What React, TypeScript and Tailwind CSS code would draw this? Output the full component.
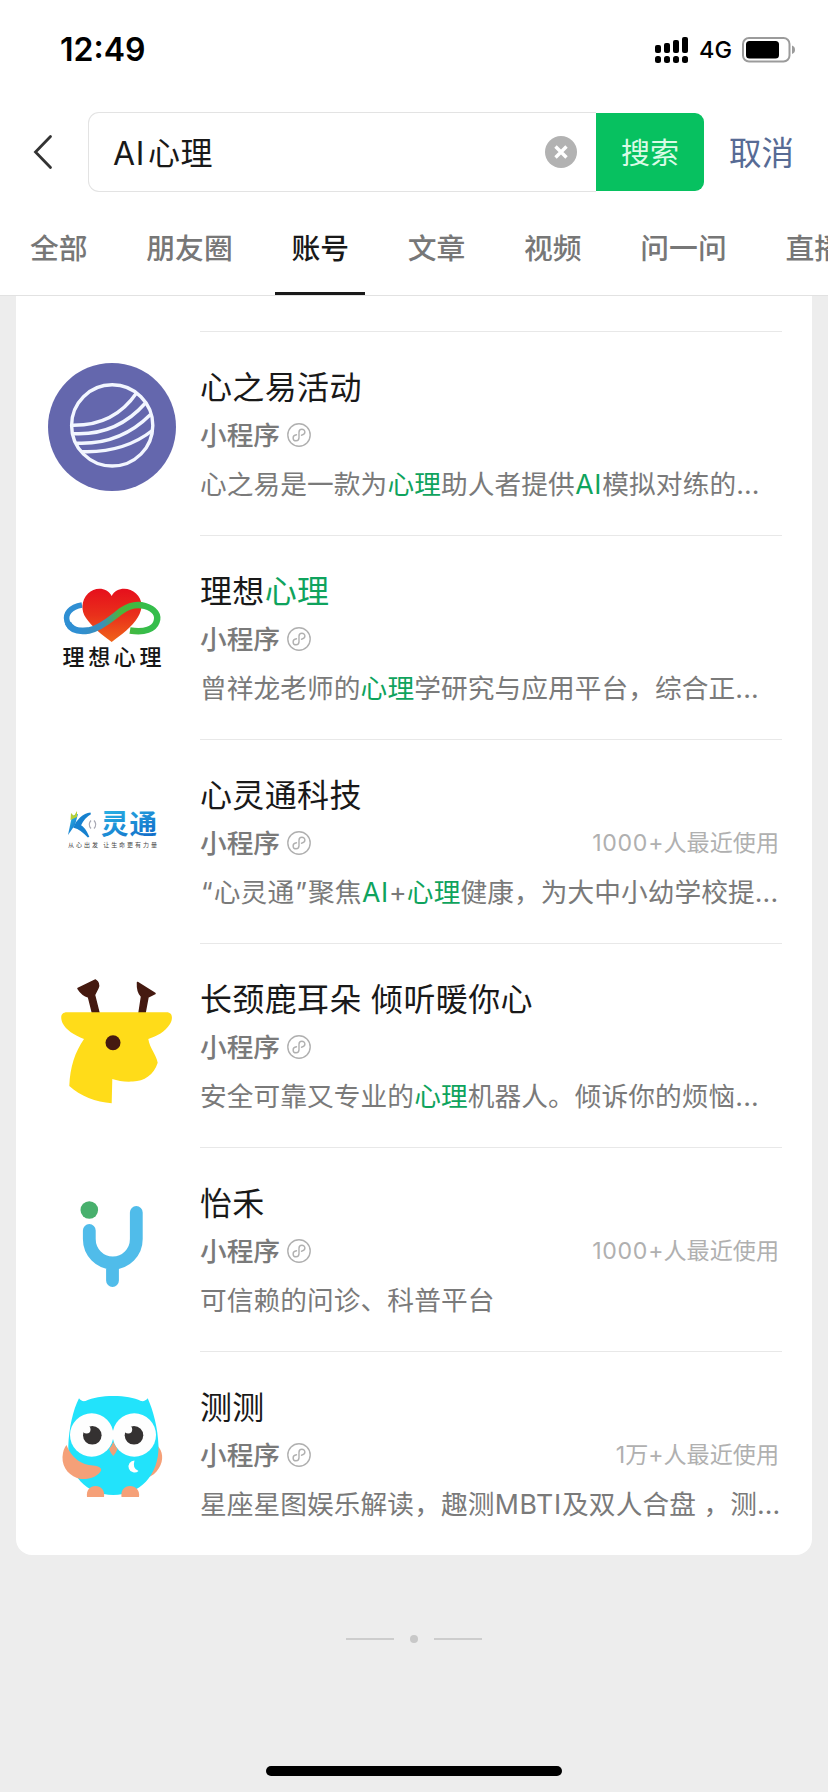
import type { ReactNode } from "react";

interface Account {
  name: ReactNode;
  description: ReactNode;
  usage?: ReactNode;
  logo: ReactNode;
}

const tabs = ["全部", "朋友圈", "账号", "文章", "视频", "问一问", "直播"];

function Mark({ children }: { children: ReactNode }) {
  return <span className="text-[#0fa35d]">{children}</span>;
}

// Latin runs are set a little wider than the Chinese text around them
function Latin({ children }: { children: ReactNode }) {
  return <span className="mx-[0.4px] tracking-[0.6px]">{children}</span>;
}

function Quote({ children }: { children: ReactNode }) {
  return <span className="mx-px">{children}</span>;
}

function PlanetLogo() {
  return (
    <svg viewBox="0 0 128 128" className="size-32" fill="none">
      <circle cx="64" cy="64" r="64" fill="#6467ad" />
      <g stroke="#f2f6ff" strokeWidth="3.4">
        <circle cx="64.2" cy="62.4" r="40.6" />
        <path d="M24 62.3Q66 63 88.5 30" />
        <path d="M25 70.6Q68 73 97 40.5" />
        <path d="M29 80.2Q72 82 102.5 51.5" />
        <path d="M34 88.6Q76 90 105 67" />
      </g>
    </svg>
  );
}

function HeartLogo() {
  return (
    <svg viewBox="0 0 128 128" className="size-32" fill="none">
      <defs>
        <linearGradient id="heart" x1="0" y1="0" x2="0" y2="1">
          <stop offset="0" stopColor="#e60f1c" />
          <stop offset="0.5" stopColor="#e9301b" />
          <stop offset="1" stopColor="#f0641a" />
        </linearGradient>
        <linearGradient id="ribbon" x1="30" y1="0" x2="100" y2="0" gradientUnits="userSpaceOnUse">
          <stop offset="0" stopColor="#2f8fd3" />
          <stop offset="0.35" stopColor="#3b8fb8" />
          <stop offset="0.6" stopColor="#4db53a" />
          <stop offset="1" stopColor="#35bd4b" />
        </linearGradient>
      </defs>
      <path d="M34 38C22 40 17 47 19 54C21 62 30 65 41 63" stroke="url(#ribbon)" strokeWidth="5.6" />
      <path
        d="M63.7 29C59 20 47 19.5 40 26.5C33 33.5 33 44 38 51C44 60 54 68 63.7 75C73 68 84 60 90 50C95 42 95 33 88 26.5C81 19.5 68 20 63.7 29Z"
        fill="url(#heart)"
      />
      <path
        d="M20 56C23 63 31 65 41 63.5C54 61 66 49 74 43.5C82 38 90 37 97 39C107 42 111 48 108.5 55C106 62 97 66 82 63.5"
        stroke="url(#ribbon)"
        strokeWidth="6.4"
      />
      <text x="14.5" y="98" textLength="99" fontSize="22" fontWeight="500" fill="#161616" fontFamily="'Noto Sans CJK SC', sans-serif">
        理想心理
      </text>
    </svg>
  );
}

function LingtongLogo() {
  return (
    <svg viewBox="0 0 128 128" className="size-32" fill="none">
      <defs>
        <linearGradient id="lingtong" x1="0" y1="0" x2="0.6" y2="1">
          <stop offset="0" stopColor="#2ec0ea" />
          <stop offset="1" stopColor="#136fc9" />
        </linearGradient>
      </defs>
      <path d="M24 45L30 43L27 54L20 64Z" fill="url(#lingtong)" />
      <path d="M42.5 42.5C35 43 29 50 26.5 56C32 57 36 61 40.5 66C38 60 35 56 32 54.5C34 50 38 45 42.5 42.5Z" fill="#1681cf" stroke="#1681cf" strokeWidth="1.8" />
      <path d="M22.5 49L23 42L26 45L29 40L29 46Z" fill="#b7cf35" />
      <path d="M43 49.5Q39.5 53.5 43 57.5M46 49.5Q49.5 53.5 46 57.5" stroke="#a9a9b4" strokeWidth="1.2" />
      <text x="53" y="63" textLength="56" fontSize="27.5" fontWeight="700" fill="url(#lingtong)" fontFamily="'Noto Sans CJK SC', sans-serif">
        灵通
      </text>
      <text x="20" y="75.8" textLength="89" fontSize="6" fill="#444" fontFamily="'Noto Sans CJK SC', sans-serif">
        从心出发 让生命更有力量
      </text>
    </svg>
  );
}

function GiraffeLogo() {
  return (
    <svg viewBox="0 0 128 128" className="size-32 overflow-visible">
      <g fill="#451a10" stroke="#451a10" strokeWidth="1.5" strokeLinejoin="round">
        <path d="M30 13.5L47.5 5Q52 8 50 13L46.5 20L51 38H44.5L40.5 22Q34 20 30 13.5Z" />
        <path d="M89.5 7.5L107 18.5L100 22L97 38H91L93.5 21.5Q89 17 89.5 7.5Z" />
      </g>
      <path
        d="M19 37.3H118.5C125 37.3 125 44 122 49C117 57 109 61 100.3 64C102 74 108 79 109.7 87.7C106 100 96 106 85 106.5C77 107 70 106 64.3 104L63.7 128.3C48 127 32 121 21.3 111C22 92 27 77 36 64C26 60 18 55 14.5 48C12 42 13 37.3 19 37.3Z"
        fill="#ffdc19"
      />
      <circle cx="65" cy="67.7" r="7.5" fill="#451a10" />
    </svg>
  );
}

function YiheLogo() {
  return (
    <svg viewBox="0 0 128 128" className="size-32" fill="none">
      <circle cx="41.3" cy="31" r="8.8" fill="#48b06d" />
      <path d="M41.3 51.5V60A23.5 24 0 0 0 88.3 60V33.5M64.5 86V101.5" stroke="#50bcea" strokeWidth="12.8" strokeLinecap="round" />
    </svg>
  );
}

function OwlLogo() {
  return (
    <svg viewBox="0 0 128 128" className="size-32">
      <path d="M109 62C115 68 116 77 111 85C108 90 104 93 99 95Z" fill="#f5a078" />
      <path
        d="M31 15.3C32.5 17.5 34.5 18.5 37.5 18C45 14.5 54 13 65.3 13C77 13 86 14.5 93 18C96 18.5 98 17.5 99.7 15.3C105 27 110 45 110.5 63C111 92 92 112 65.3 112C39 112 19.5 92 20.3 63C21 45 25 27 31 15.3Z"
        fill="#22e3fb"
      />
      <path d="M18.5 62C23 75 34 82 45 82.5Q53 83 53.3 87C51 93 42 96.5 33 96C22 94 14 85 14.5 74Q15 66 18.5 62Z" fill="#f5a078" />
      <circle cx="43.7" cy="52" r="21.7" fill="#fefefe" />
      <circle cx="86.3" cy="52" r="21.7" fill="#fefefe" />
      <circle cx="44.3" cy="52.3" r="9.3" fill="#343131" />
      <circle cx="86" cy="52.3" r="9.3" fill="#343131" />
      <circle cx="38.5" cy="46.5" r="4" fill="#fefefe" />
      <circle cx="80.2" cy="46.5" r="4" fill="#fefefe" />
      <path d="M65.3 58.7Q67 63 69.5 66Q68 70 65.3 73Q62.5 70 61 66Q64 63 65.3 58.7Z" fill="#ef9f78" />
      <path d="M86.5 77.5A6 6 0 1 0 90.5 88Q84 85.5 86.5 77.5Z" fill="#fff" />
      <path d="M39 114C38 107 42 103 47.5 103S57 107 56 114Z" fill="#f5a078" />
      <path d="M73.5 114C72.5 107 76.5 103 82 103S92 107 91 114Z" fill="#f5a078" />
    </svg>
  );
}

const accounts: Account[] = [
  {
    name: "心之易活动",
    description: <>心之易是一款为<Mark>心理</Mark>助人者提供<Mark><Latin>AI</Latin></Mark>模拟对练的...</>,
    logo: <PlanetLogo />,
  },
  {
    name: <>理想<Mark>心理</Mark></>,
    description: <>曾祥龙老师的<Mark>心理</Mark>学研究与应用平台，综合正...</>,
    logo: <HeartLogo />,
  },
  {
    name: "心灵通科技",
    description: (
      <>
        <Quote>“</Quote>心灵通<Quote>”</Quote>聚焦<Mark><Latin>AI</Latin></Mark>+<Mark>心理</Mark>健康，为大中小幼学校提...
      </>
    ),
    usage: <><Latin>1000</Latin>+人最近使用</>,
    logo: <LingtongLogo />,
  },
  {
    name: "长颈鹿耳朵 倾听暖你心",
    description: <>安全可靠又专业的<Mark>心理</Mark>机器人。倾诉你的烦恼...</>,
    logo: <GiraffeLogo />,
  },
  {
    name: "怡禾",
    description: "可信赖的问诊、科普平台",
    usage: <><Latin>1000</Latin>+人最近使用</>,
    logo: <YiheLogo />,
  },
  {
    name: "测测",
    description: <>星座星图娱乐解读，趣测<Latin>MBTI</Latin>及双人合盘 ，测...</>,
    usage: "1万+人最近使用",
    logo: <OwlLogo />,
  },
];

function StatusBar() {
  return (
    <div className="flex h-[100px] items-center justify-between pr-8 pl-[60px] text-black">
      <span className="text-[32px] leading-10 font-semibold">12:49</span>
      <div className="flex items-center">
        <svg viewBox="0 0 34 26" className="h-[26px] w-[34px]">
          <rect x="0" y="8" width="6" height="8" rx="2" />
          <rect x="9" y="6" width="6" height="10" rx="2" />
          <rect x="18" y="3" width="6" height="13" rx="2" />
          <rect x="27" y="0" width="6" height="16" rx="2" />
          <rect x="0" y="19" width="6" height="7" rx="2.5" />
          <rect x="9" y="19" width="6" height="7" rx="2.5" />
          <rect x="18" y="19" width="6" height="7" rx="2.5" />
          <rect x="27" y="19" width="6" height="7" rx="2.5" />
        </svg>
        <span className="ml-2.5 text-[23.5px] leading-8 font-medium">4G</span>
        <svg viewBox="0 0 54 26" className="ml-2.5 h-[26px] w-[54px]">
          <rect x="1" y="1" width="46.5" height="23.5" rx="6" fill="none" stroke="#9b9b9b" strokeWidth="2" />
          <rect x="4" y="4" width="33" height="17.5" rx="3.5" />
          <path d="M50 8.5Q53 9.5 53 12.8T50 17Z" fill="#9b9b9b" />
        </svg>
      </div>
    </div>
  );
}

function SearchBar() {
  return (
    <div className="flex h-[104px] items-center pl-8">
      <svg viewBox="0 0 22 36" className="h-9 w-[22px]" fill="none" stroke="#333" strokeWidth="2.8" strokeLinecap="round">
        <path d="M18.5 2.5L3.5 18L18.5 33.5" />
      </svg>
      <div className="ml-[34px] flex h-20 w-[508px] items-center justify-between rounded-l-[11px] border border-r-0 border-[#e3e3e3] pr-[19px] pl-6">
        <span className="pt-1 text-[32px] leading-10 tracking-[0.6px] text-[#191919]">
          <span className="mr-[3px]">AI</span>心理
        </span>
        <svg viewBox="0 0 32 32" className="size-8">
          <circle cx="16" cy="16" r="16" fill="#b2b2b2" />
          <path d="M10.5 10.5L21.5 21.5M21.5 10.5L10.5 21.5" stroke="#fff" strokeWidth="3.4" />
        </svg>
      </div>
      <button className="h-[78px] w-[108px] rounded-r-[9px] bg-[#07c160] pt-1 text-[29px] text-[#d9fbe6]">搜索</button>
      <button className="ml-[25px] pt-1 text-[32.5px] text-[#576b95]">取消</button>
    </div>
  );
}

function TabBar() {
  return (
    <nav className="flex h-[92px] gap-[26.7px] overflow-hidden border-b border-[#e2e2e2] pl-3.5 text-[28.8px] font-medium whitespace-nowrap">
      {tabs.map((tab) => (
        <span
          key={tab}
          className={`h-[92px] shrink-0 px-4 leading-[90px] ${tab === "账号" ? "border-b-4 border-[#191919] text-[#191919]" : "text-[#777]"}`}
        >
          {tab}
        </span>
      ))}
    </nav>
  );
}

function AccountRow({ account }: { account: Account }) {
  return (
    <li className="flex h-[204px] gap-6 pr-[30px] pl-8">
      <div className="w-32 shrink-0 pt-8">{account.logo}</div>
      <div className="flex min-w-0 flex-1 flex-col border-t border-[#e8e8e8] pt-9 whitespace-nowrap">
        <h3 className="h-10 text-[32px] leading-10 tracking-[0.35px] text-[#191919]">{account.name}</h3>
        <div className="mt-[9px] flex h-9 items-center text-[#7a7a7a]">
          <span className="text-[26.7px] leading-9 font-medium">小程序</span>
          <svg viewBox="0 0 24 24" className="ml-[7px] size-6" fill="none" stroke="#b0b0b0" strokeWidth="1.4" strokeLinecap="round">
            <circle cx="12" cy="12" r="11.2" />
            <path d="M14.5 12.2c2-.3 3.4-1.500 3.4-3.100 0-1.700-1.400-2.900-3-2.900S12 7.500 12 9.200v5.600c0 1.700-1.300 3-2.900 3s-3-1.200-3-2.900c0-1.600 1.400-2.800 3.400-3.100" />
          </svg>
          {account.usage && <span className="ml-auto pr-[3px] text-[23.1px] text-[#b0b0b0]">{account.usage}</span>}
        </div>
        <p className="mt-[11px] h-10 text-[26.7px] leading-10 tracking-[0.08px] text-[#7a7a7a]">{account.description}</p>
      </div>
    </li>
  );
}

export default function App() {
  return (
    <div className="flex h-[1792px] w-[828px] flex-col overflow-hidden bg-[#ededed] font-[Inter,'Noto_Sans_CJK_SC',sans-serif]">
      <header className="bg-white">
        <StatusBar />
        <SearchBar />
        <TabBar />
      </header>
      <ul className="mx-4 rounded-b-2xl bg-white pt-[35px]">
        {accounts.map((account, index) => (
          <AccountRow key={index} account={account} />
        ))}
      </ul>
      <div className="mt-20 flex items-center justify-center gap-4">
        <span className="h-0.5 w-12 bg-[#cdcdcd]" />
        <span className="size-2 rounded-full bg-[#c8c8c8]" />
        <span className="h-0.5 w-12 bg-[#cdcdcd]" />
      </div>
      <div className="mx-auto mt-auto mb-4 h-2.5 w-[296px] rounded-full bg-black" />
    </div>
  );
}
